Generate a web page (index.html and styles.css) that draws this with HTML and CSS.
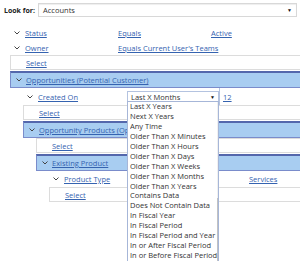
FILE: index.html
```html
<!DOCTYPE html>
<html lang="en">
  <head>
    <meta charset="UTF-8" />
    <title>Advanced Find</title>
    <link rel="stylesheet" href="styles.css">
  </head>
  <body>
    <div class="lookfor">
      <span class="lookfor-label">Look for:</span>
      <div class="picker">
        <span>Accounts</span>
        <span class="arrow">&#9660;</span>
      </div>
    </div>

    <div class="tree">
      <div class="cond lvl0">
        <span class="chev"><svg width="6" height="4" viewBox="0 0 6 4"><polyline points="0.5,0.5 3,3 5.5,0.5" /></svg></span>
        <a href="#">Status</a>
        <a href="#">Equals</a>
        <a href="#">Active</a>
      </div>
      <div class="cond lvl0">
        <span class="chev"><svg width="6" height="4" viewBox="0 0 6 4"><polyline points="0.5,0.5 3,3 5.5,0.5" /></svg></span>
        <a href="#">Owner</a>
        <a href="#">Equals Current User's Teams</a>
        <span></span>
      </div>
      <div class="select-row"><a href="#">Select</a></div>

      <!-- related entity: opportunities -->
      <div class="group">
        <div class="group-head">
          <span class="chev"><svg width="6" height="4" viewBox="0 0 6 4"><polyline points="0.5,0.5 3,3 5.5,0.5" /></svg></span>
          <a href="#">Opportunities (Potential Customer)</a>
        </div>
        <div class="group-body">
          <div class="cond lvl1">
            <span class="chev"><svg width="6" height="4" viewBox="0 0 6 4"><polyline points="0.5,0.5 3,3 5.5,0.5" /></svg></span>
            <a href="#">Created On</a>
            <div class="op-select">
              <div class="op-box">
                <span>Last X Months</span>
                <span class="arrow">&#9660;</span>
              </div>
              <div class="op-list">
                <ul>
                  <li>Last X Years</li>
                  <li>Next X Years</li>
                  <li>Any Time</li>
                  <li>Older Than X Minutes</li>
                  <li>Older Than X Hours</li>
                  <li>Older Than X Days</li>
                  <li>Older Than X Weeks</li>
                  <li>Older Than X Months</li>
                  <li>Older Than X Years</li>
                  <li>Contains Data</li>
                  <li>Does Not Contain Data</li>
                  <li>In Fiscal Year</li>
                  <li>In Fiscal Period</li>
                  <li>In Fiscal Period and Year</li>
                  <li>In or After Fiscal Period</li>
                  <li>In or Before Fiscal Period</li>
                </ul>
                <div class="scrollbar">
                  <span class="up">&#9650;</span>
                  <span class="thumb"></span>
                </div>
              </div>
            </div>
            <a href="#" class="value">12</a>
          </div>
          <div class="select-row"><a href="#">Select</a></div>

          <div class="group">
            <div class="group-head">
              <span class="chev"><svg width="6" height="4" viewBox="0 0 6 4"><polyline points="0.5,0.5 3,3 5.5,0.5" /></svg></span>
              <a href="#">Opportunity Products (Opportunity)</a>
            </div>
            <div class="group-body">
              <div class="select-row"><a href="#">Select</a></div>

              <div class="group">
                <div class="group-head">
                  <span class="chev"><svg width="6" height="4" viewBox="0 0 6 4"><polyline points="0.5,0.5 3,3 5.5,0.5" /></svg></span>
                  <a href="#">Existing Product</a>
                </div>
                <div class="group-body">
                  <div class="cond lvl3">
                    <span class="chev"><svg width="6" height="4" viewBox="0 0 6 4"><polyline points="0.5,0.5 3,3 5.5,0.5" /></svg></span>
                    <a href="#">Product Type</a>
                    <span></span>
                    <a href="#">Services</a>
                  </div>
                  <div class="select-row"><a href="#">Select</a></div>
                </div>
              </div>
            </div>
          </div>
        </div>
      </div>
    </div>
  </body>
</html>
```

FILE: styles.css
```css
body {
  margin: 0;
  padding: 0;
  min-height: 261px;
  background-color: #ffffff;
  font-family: "Open Sans", "Segoe UI", sans-serif;
  font-size: 7.5px;
  color: #333333;
}

a {
  color: #3563b0;
  text-decoration: underline;
  white-space: nowrap;
}

.lookfor {
  display: flex;
  align-items: center;
  gap: 3px;
  padding: 3px 3px 0 4px;
}

.lookfor-label {
  font-weight: bold;
  font-size: 7px;
  color: #222222;
  white-space: nowrap;
}

.picker {
  flex: 1;
  height: 12px;
  display: flex;
  align-items: center;
  justify-content: space-between;
  padding: 0 4px;
  border: 1px solid #d8d8d8;
  box-shadow: inset 0 1px 1px #eeeeee;
}

.arrow {
  font-size: 5px;
  color: #111111;
}

.tree {
  padding: 8px 0 0 10px;
}

.chev svg {
  display: block;
  fill: none;
  stroke: #444444;
  stroke-width: 1;
}

.chev {
  display: flex;
  justify-content: center;
  width: 14px;
}

.cond {
  height: 15px;
  display: grid;
  align-items: center;
}

.lvl0 {
  grid-template-columns: 15px 93px 93px 1fr;
}

.lvl1 {
  height: 17px;
  grid-template-columns: 15px 89px 92px 1fr;
}

.lvl3 {
  height: 16px;
  grid-template-columns: 15px 92px 93px 1fr;
}

.select-row {
  height: 13px;
  display: flex;
  align-items: center;
  padding-left: 15px;
  border: 1px solid #dcdcdc;
  border-right: none;
  margin-bottom: 1px;
}

.group-head {
  height: 14px;
  display: flex;
  align-items: center;
  background-color: #a8cdf1;
  border: 1px solid #7a8ccb;
  border-top: 2px solid #5467ac;
  border-right: none;
}

.group-head .chev {
  width: 15px;
}

.group-body {
  padding-left: 13px;
}

.op-select {
  position: relative;
  height: 11px;
}

.op-box {
  height: 9px;
  display: flex;
  align-items: center;
  justify-content: space-between;
  padding: 0 3px;
  border: 1px solid #b4c3e0;
  background-color: #ffffff;
}

.op-list {
  position: absolute;
  top: 10px;
  left: 0;
  width: 90px;
  height: 159px;
  display: flex;
  overflow: hidden;
  background-color: #ffffff;
  border: 1px solid #a6b6d8;
  border-bottom: none;
  z-index: 10;
}

.op-list ul {
  flex: 1;
  list-style: none;
  margin: 0;
  padding: 0 0 0 2px;
}

.op-list li {
  height: 9.95px;
  line-height: 9.95px;
  white-space: nowrap;
  overflow: hidden;
}

.scrollbar {
  width: 10px;
  display: flex;
  flex-direction: column;
  align-items: center;
  background-color: #f0f0f0;
}

.scrollbar .up {
  height: 10px;
  line-height: 10px;
  font-size: 4px;
  color: #555555;
}

.scrollbar .thumb {
  width: 8px;
  margin-top: 86px;
  flex: 1;
  background-color: #c2c2c2;
}

.value {
  padding-left: 3px;
  border-left: 1px solid #b4c3e0;
  align-self: stretch;
  display: flex;
  align-items: center;
}
```
